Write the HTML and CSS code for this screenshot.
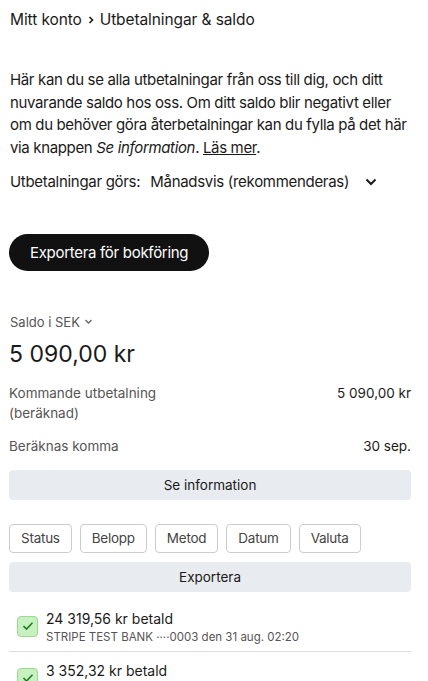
FILE: index.html
```html
<!DOCTYPE html>
<html lang="sv">
<head>
    <meta charset="UTF-8">
    <meta name="viewport" content="width=device-width, initial-scale=1.0">
    <title>Utbetalningar &amp; saldo</title>
    <link rel="stylesheet" href="styles.css">
</head>
<body>
    <div class="page">
        <nav class="crumbs">
            <span>Mitt konto</span>
            <svg class="crumb-sep" width="8" height="10" viewBox="0 0 8 10"><path d="M2.5 2 L5.5 5 L2.5 8" fill="none" stroke="#1a1a1a" stroke-width="1.6"/></svg>
            <span>Utbetalningar &amp; saldo</span>
        </nav>

        <p class="intro">Här kan du se alla utbetalningar från oss till dig, och ditt nuvarande saldo hos oss. Om ditt saldo blir negativt eller om du behöver göra återbetalningar kan du fylla på det här via knappen <em>Se information</em>. <a href="#">Läs mer</a>.</p>

        <div class="schedule">
            <span class="schedule-label">Utbetalningar görs:</span>
            <span class="schedule-value">Månadsvis (rekommenderas)</span>
            <svg width="14" height="10" viewBox="0 0 14 10"><path d="M2.5 2.5 L7 7 L11.5 2.5" fill="none" stroke="#1a1a1a" stroke-width="2"/></svg>
        </div>

        <button class="btn-dark">Exportera för bokföring</button>

        <section class="balance">
            <div class="currency">Saldo i SEK
                <svg width="9" height="7" viewBox="0 0 9 7"><path d="M1.5 2 L4.5 5 L7.5 2" fill="none" stroke="#666" stroke-width="1.3"/></svg>
            </div>
            <div class="amount">5 090,00 kr</div>
            <div class="row">
                <span class="row-label">Kommande utbetalning (beräknad)</span>
                <span class="row-value">5 090,00 kr</span>
            </div>
            <div class="row">
                <span class="row-label">Beräknas komma</span>
                <span class="row-value">30 sep.</span>
            </div>
            <button class="btn-gray">Se information</button>
        </section>

        <div class="filters">
            <button class="chip">Status</button>
            <button class="chip">Belopp</button>
            <button class="chip">Metod</button>
            <button class="chip">Datum</button>
            <button class="chip">Valuta</button>
        </div>
        <button class="btn-gray">Exportera</button>

        <ul class="payouts">
            <li class="payout">
                <span class="check"><svg width="12" height="10" viewBox="0 0 12 10"><path d="M1.5 5 L4.5 8 L10.5 1.8" fill="none" stroke="#1f7a1f" stroke-width="1.6"/></svg></span>
                <div>
                    <div class="payout-title">24 319,56 kr betald</div>
                    <div class="payout-sub">STRIPE TEST BANK ····0003 den 31 aug. 02:20</div>
                </div>
            </li>
            <li class="payout">
                <span class="check"><svg width="12" height="10" viewBox="0 0 12 10"><path d="M1.5 5 L4.5 8 L10.5 1.8" fill="none" stroke="#1f7a1f" stroke-width="1.6"/></svg></span>
                <div>
                    <div class="payout-title">3 352,32 kr betald</div>
                    <div class="payout-sub">STRIPE TEST BANK ····0003 den 31 jul. 02:20</div>
                </div>
            </li>
        </ul>
    </div>
</body>
</html>
```

FILE: styles.css
```css
body {
    font-family: 'Inter', 'Liberation Sans', sans-serif;
    color: #1a1a1a;
    background-color: #ffffff;
    margin: 0;
    padding: 0;
}
.page {
    padding: 10px 17px 0 9px;
}
.crumbs {
    display: flex;
    align-items: center;
    gap: 5px;
    font-size: 15.5px;
    line-height: 20px;
    letter-spacing: -0.1px;
    padding-left: 1px;
}
.intro {
    font-size: 15px;
    line-height: 22.7px;
    letter-spacing: -0.35px;
    margin: 39px -4px 0 1px;
}
.intro a {
    color: #1a1a1a;
}
.schedule {
    display: flex;
    align-items: center;
    font-size: 15px;
    line-height: 20px;
    letter-spacing: -0.3px;
    margin: 12px 0 0 1px;
}
.schedule-label {
    margin-right: 10px;
}
.schedule-value {
    margin-right: 15px;
}
.btn-dark {
    display: block;
    margin-top: 42px;
    height: 37px;
    padding: 0 21px;
    background-color: #111111;
    color: #ffffff;
    border: none;
    border-radius: 19px;
    font-family: inherit;
    font-size: 15px;
    letter-spacing: -0.3px;
}
.balance {
    margin-top: 42px;
}
.currency {
    display: flex;
    align-items: center;
    gap: 4px;
    font-size: 13px;
    color: #555555;
    line-height: 18px;
    padding-left: 1px;
}
.amount {
    font-size: 23px;
    line-height: 28px;
    margin-top: 9px;
}
.row {
    display: flex;
    justify-content: space-between;
    align-items: flex-start;
    font-size: 13.5px;
    line-height: 20px;
    margin-top: 15px;
}
.row + .row {
    margin-top: 13px;
}
.row-label {
    width: 160px;
    color: #555555;
}
.btn-gray {
    display: block;
    width: 100%;
    height: 30px;
    border: none;
    border-radius: 4px;
    background-color: #e8ebef;
    color: #1a1a1a;
    font-family: inherit;
    font-size: 13.5px;
}
.balance .btn-gray {
    margin-top: 14px;
}
.filters {
    display: flex;
    gap: 8px;
    margin: 24px 0 9px;
}
.chip {
    height: 29px;
    padding: 0 11px;
    background-color: #ffffff;
    border: 1px solid #cccccc;
    border-radius: 4px;
    color: #444444;
    font-family: inherit;
    font-size: 13.5px;
    letter-spacing: -0.25px;
}
.payouts {
    list-style: none;
    margin: 8px 0 0;
    padding: 0;
}
.payout {
    display: flex;
    align-items: flex-start;
    gap: 8px;
    padding: 10px 0 5px 8px;
    border-bottom: 1px solid #dddddd;
}
.check {
    display: flex;
    align-items: center;
    justify-content: center;
    width: 19px;
    height: 19px;
    margin-top: 6px;
    background-color: #c8f1c0;
    border: 1px solid #9ad894;
    border-radius: 4px;
}
.payout-title {
    font-size: 14px;
    line-height: 18px;
}
.payout-sub {
    font-size: 11.5px;
    line-height: 18px;
    color: #555555;
}
```
